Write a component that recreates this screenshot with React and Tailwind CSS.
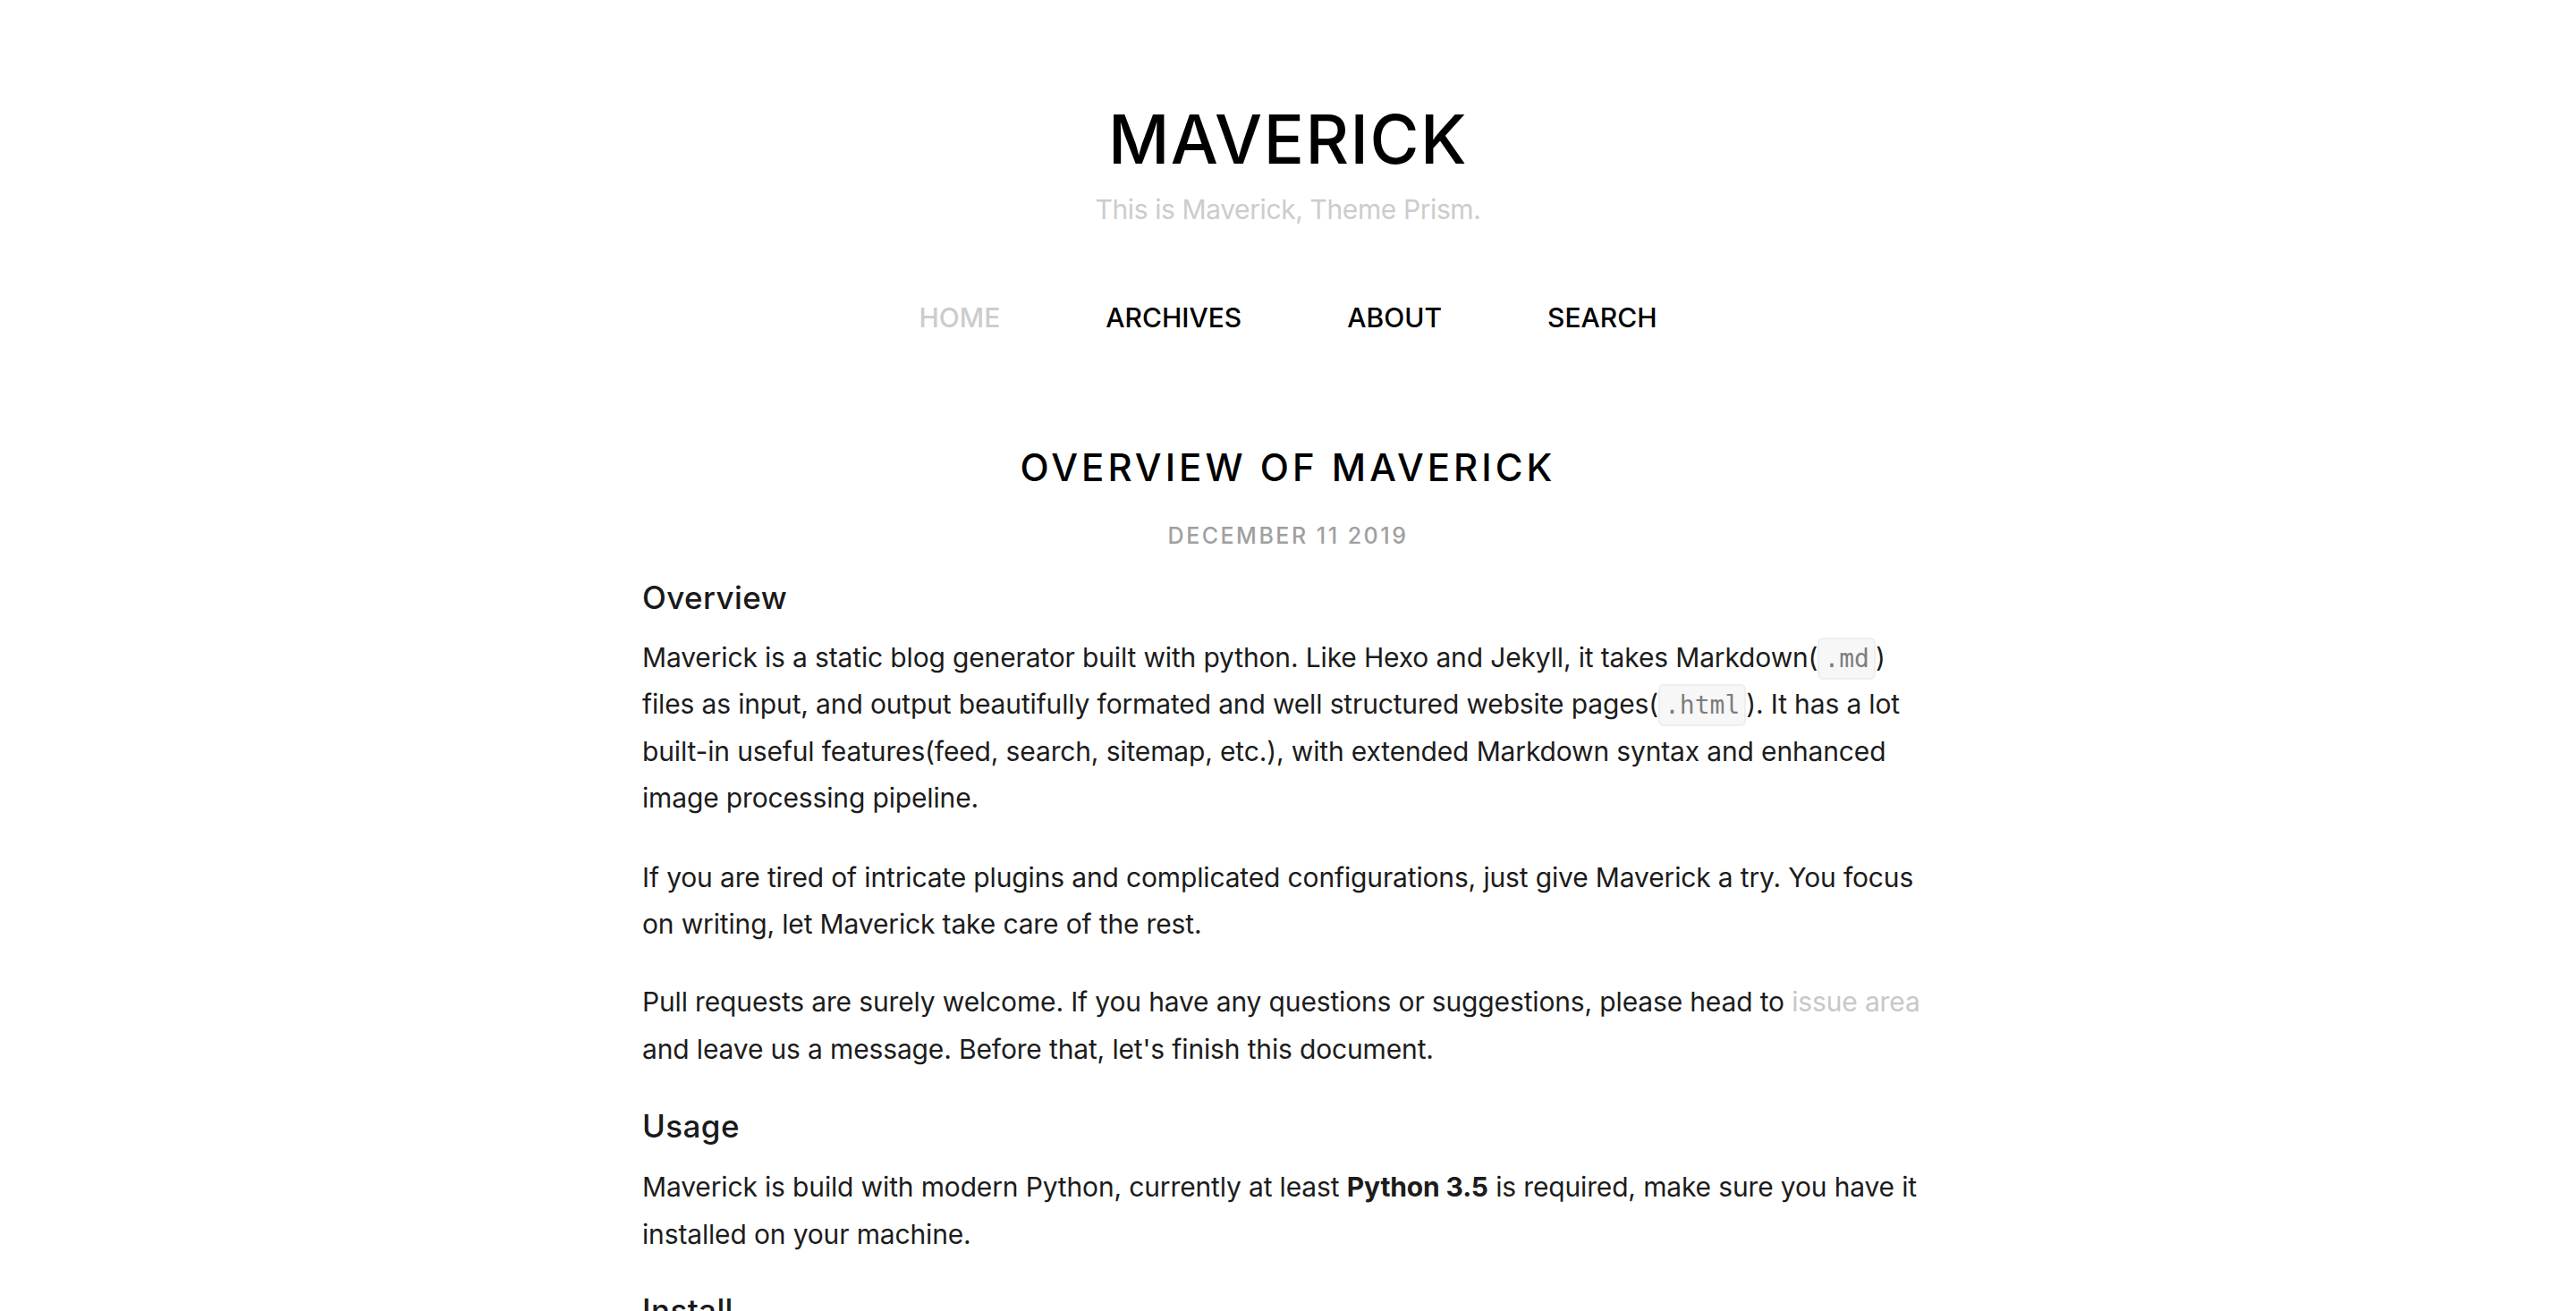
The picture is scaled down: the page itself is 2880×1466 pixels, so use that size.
import React from 'react';

const navItems = [
  { label: 'HOME', active: true },
  { label: 'ARCHIVES' },
  { label: 'ABOUT' },
  { label: 'SEARCH' },
];

const Code = ({ children }) => (
  <code className="font-['DejaVu_Sans_Mono',monospace] text-[28px] leading-none tracking-normal text-[#7d7d7d] bg-[#f7f7f7] border-2 border-[#eeeeee] rounded-[6px] px-[5px] py-[5px]">
    {children}
  </code>
);

const App = () => {
  return (
    <div className="min-h-screen bg-white font-['Inter',sans-serif] text-[#1c1c1c]">
      {/* Header */}
      <header className="pt-[118px] flex flex-col items-center">
        <h1 className="text-[75px] leading-[75px] font-medium tracking-[1.5px] text-black">MAVERICK</h1>
        <p className="mt-[26px] text-[30px] leading-[30px] tracking-[-0.4px] text-[#cccccc]">This is Maverick, Theme Prism.</p>
        <nav className="mt-[91px] flex justify-center">
          {navItems.map((item) => (
            <a
              key={item.label}
              href="#"
              className={`px-[59px] text-[30px] leading-[30px] font-medium ${item.active ? 'text-[#cccccc]' : 'text-black'}`}
            >
              {item.label}
            </a>
          ))}
        </nav>
      </header>

      {/* Post */}
      <main className="max-w-[1444px] mx-auto">
        <h2 className="mt-[132px] text-center text-[42px] leading-[42px] font-medium tracking-[4px] text-black">
          OVERVIEW OF MAVERICK
        </h2>
        <p className="mt-[43px] text-center text-[25px] leading-[25px] font-medium tracking-[2.5px] text-[#a0a0a0]">
          DECEMBER 11 2019
        </p>

        <article className="text-[30px] leading-[52.4px] tracking-[-0.15px]">
          <h3 className="mt-[39px] text-[35px] leading-[34px] font-medium tracking-[0.4px] text-[#1a1a1a]">Overview</h3>
          <p className="mt-[24px]">
            Maverick is a static blog generator built with python. Like Hexo and Jekyll, it takes Markdown(<Code>.md</Code>) files as input, and output beautifully formated and well structured website pages(<Code>.html</Code>). It has a lot built-in useful features(feed, search, sitemap, etc.), with extended Markdown syntax and enhanced image processing pipeline.
          </p>
          <p className="mt-[36px]">
            If you are tired of intricate plugins and complicated configurations, just give Maverick a try. You focus on writing, let Maverick take care of the rest.
          </p>
          <p className="mt-[35px]">
            Pull requests are surely welcome. If you have any questions or suggestions, please head to{' '}
            <a href="#" className="text-[#c8c8c8]">issue area</a> and leave us a message. Before that, let's finish this document.
          </p>

          <h3 className="mt-[43px] text-[35px] leading-[34px] font-medium tracking-[0.4px] text-[#1a1a1a]">Usage</h3>
          <p className="mt-[25px]">
            Maverick is build with modern Python, currently at least <strong className="font-bold">Python 3.5</strong> is required, make sure you have it installed on your machine.
          </p>

          <h3 className="mt-[42px] text-[35px] leading-[34px] font-medium tracking-[0.4px] text-[#1a1a1a]">Install</h3>
          <p className="mt-[25px] pb-[80px]">
            Clone Maverick from GitHub and install the dependencies with <Code>pip</Code>.
          </p>
        </article>
      </main>
    </div>
  );
};

export default App;
